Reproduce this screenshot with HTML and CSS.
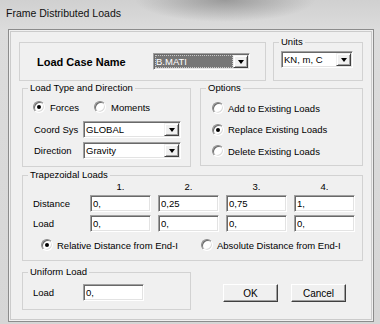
FILE: index.html
```html
<!DOCTYPE html>
<html lang="en">
<head>
  <meta charset="UTF-8">
  <title>Frame Distributed Loads</title>
  <link rel="stylesheet" href="styles.css">
</head>
<body>
  <div class="window">
    <div class="titlebar">Frame Distributed Loads</div>
    <div class="client">
      <div class="dialog">

        <div class="row row-top">
          <div class="group group-case">
            <span class="case-label">Load Case Name</span>
            <div class="combo combo-case">
              <span class="combo-text selected">B.MATI</span>
              <span class="combo-btn"><i class="arrow"></i></span>
            </div>
          </div>
          <div class="group group-units">
            <span class="group-title">Units</span>
            <div class="combo combo-units">
              <span class="combo-text">KN, m, C</span>
              <span class="combo-btn"><i class="arrow"></i></span>
            </div>
          </div>
        </div>

        <div class="row row-mid">
          <div class="group group-type">
            <span class="group-title">Load Type and Direction</span>
            <div class="radio-row">
              <label class="opt opt-forces"><span class="radio on"></span>Forces</label>
              <label class="opt"><span class="radio"></span>Moments</label>
            </div>
            <div class="field-grid">
              <span>Coord Sys</span>
              <div class="combo">
                <span class="combo-text">GLOBAL</span>
                <span class="combo-btn"><i class="arrow"></i></span>
              </div>
              <span>Direction</span>
              <div class="combo">
                <span class="combo-text">Gravity</span>
                <span class="combo-btn"><i class="arrow"></i></span>
              </div>
            </div>
          </div>
          <div class="group group-options">
            <span class="group-title">Options</span>
            <label class="opt"><span class="radio"></span>Add to Existing Loads</label>
            <label class="opt"><span class="radio on"></span>Replace Existing Loads</label>
            <label class="opt"><span class="radio"></span>Delete Existing Loads</label>
          </div>
        </div>

        <div class="group group-trap">
          <span class="group-title">Trapezoidal Loads</span>
          <div class="trap-grid">
            <span></span>
            <span class="col-head">1.</span>
            <span class="col-head">2.</span>
            <span class="col-head">3.</span>
            <span class="col-head">4.</span>

            <span>Distance</span>
            <input class="field" type="text" value="0,">
            <input class="field" type="text" value="0,25">
            <input class="field" type="text" value="0,75">
            <input class="field" type="text" value="1,">

            <span>Load</span>
            <input class="field" type="text" value="0,">
            <input class="field" type="text" value="0,">
            <input class="field" type="text" value="0,">
            <input class="field" type="text" value="0,">
          </div>
          <div class="trap-radios">
            <label class="opt opt-relative"><span class="radio on"></span>Relative Distance from End-I</label>
            <label class="opt"><span class="radio"></span>Absolute Distance from End-I</label>
          </div>
        </div>

        <div class="row row-bottom">
          <div class="group group-uniform">
            <span class="group-title">Uniform Load</span>
            <span class="uniform-label">Load</span>
            <input class="field" type="text" value="0,">
          </div>
          <button class="btn btn-ok">OK</button>
          <button class="btn btn-cancel">Cancel</button>
        </div>

      </div>
    </div>
  </div>
</body>
</html>
```

FILE: styles.css
```css
* { box-sizing: border-box; }
body {
  margin: 0;
  font-family: "Liberation Sans", Arial, sans-serif;
  font-size: 9.5px;
  color: #000;
}

.window {
  width: 380px;
  height: 324px;
  overflow: hidden;
  background:
    radial-gradient(ellipse 90px 22px at 225px 0, rgba(100,100,100,.5), rgba(100,100,100,0)),
    linear-gradient(#d0d0d0, #dcdcdc 30px, #d6d6d6);
}
.titlebar {
  height: 29px;
  padding-left: 6px;
  line-height: 26px;
  font-size: 10.5px;
  color: #111;
}

.client {
  margin-left: 8px;
  width: 366px;
  height: 293px;
  padding: 1px;
  border: 1px solid #8c8c8c;
  background: #f0f0f0;
}
.dialog {
  height: 100%;
  border: 1px solid #cbcbcb;
}

.row { display: flex; align-items: flex-start; }
.row-top { margin-top: 10px; }
.row-mid { margin-top: 7px; }
.row-bottom { margin-top: 11px; }

.group {
  position: relative;
  border: 1px solid #d2d2d2;
}
.group-title {
  position: absolute;
  top: -7px;
  left: 5px;
  padding: 0 2px;
  line-height: 12px;
  background: #f0f0f0;
}

/* load case */
.group-case {
  margin-left: 8px;
  width: 247px;
  height: 39px;
  display: flex;
  align-items: center;
  padding-left: 17px;
}
.case-label {
  width: 116px;
  font-size: 11px;
  font-weight: bold;
}
.combo-case { width: 97px; }

.group-units {
  margin-left: 7px;
  width: 90px;
  height: 39px;
  padding: 8px 0 0 7px;
}
.combo-units { width: 72px; }

/* combo boxes */
.combo {
  display: flex;
  height: 17px;
  padding: 1px;
  background: #fff;
  border: 1px solid;
  border-color: #a0a0a0 #fff #fff #a0a0a0;
  box-shadow: inset 1px 1px #696969, inset -1px -1px #e3e3e3;
}
.combo-text {
  flex: 1;
  padding-left: 1px;
  line-height: 13px;
  white-space: nowrap;
  overflow: hidden;
}
.combo-text.selected {
  background: #767676;
  color: #fff;
  border: 1px dotted #c8c8c8;
  line-height: 11px;
  padding-left: 0;
}
.combo-btn {
  width: 15px;
  display: flex;
  align-items: center;
  justify-content: center;
  background: #f0f0f0;
  border: 1px solid;
  border-color: #f0f0f0 #404040 #404040 #f0f0f0;
  box-shadow: inset 1px 1px #fff, inset -1px -1px #a0a0a0;
}
.arrow {
  width: 1px;
  height: 0;
  border-left: 3px solid transparent;
  border-right: 3px solid transparent;
  border-top: 4px solid #000;
}

/* radios */
.opt {
  display: flex;
  align-items: center;
  gap: 5px;
  height: 14px;
  white-space: nowrap;
}
.radio {
  width: 12px;
  height: 12px;
  flex: none;
  display: flex;
  align-items: center;
  justify-content: center;
  border-radius: 50%;
  background: #fff;
  border: 1px solid;
  border-color: #8a8a8a #fff #fff #8a8a8a;
  box-shadow: inset 1px 1px #6a6a6a, inset -1px -1px #dcdcdc;
}
.radio.on::after {
  content: "";
  width: 4px;
  height: 4px;
  border-radius: 50%;
  background: #000;
}

/* load type */
.group-type {
  margin-left: 11px;
  width: 169px;
  height: 79px;
  padding: 11px 0 0 10px;
}
.radio-row { display: flex; }
.opt-forces { width: 61px; }
.field-grid {
  display: grid;
  grid-template-columns: 49px 98px;
  row-gap: 4px;
  align-items: center;
  margin: 7px 0 0 1px;
}

/* options */
.group-options {
  margin-left: 9px;
  width: 163px;
  height: 78px;
  padding: 12px 0 0 11px;
  display: flex;
  flex-direction: column;
  gap: 7.5px;
}
.group-options .opt { gap: 4px; }

/* trapezoidal */
.group-trap {
  margin: 8px 0 0 11px;
  width: 341px;
  height: 86px;
  padding: 6px 0 0 10px;
}
.trap-grid {
  display: grid;
  grid-template-columns: 50px repeat(4, 61px);
  grid-template-rows: 10px 17px 17px;
  column-gap: 7px;
  row-gap: 3px;
  align-items: center;
}
.col-head {
  text-align: center;
  line-height: 10px;
}
.field {
  width: 61px;
  height: 17px;
  margin: 0;
  padding: 0 2px;
  font: inherit;
  color: #000;
  background: #fff;
  border: 1px solid;
  border-color: #a0a0a0 #fff #fff #a0a0a0;
  box-shadow: inset 1px 1px #696969, inset -1px -1px #e3e3e3;
  outline: none;
}
.trap-radios {
  display: flex;
  margin: 6px 0 0 8px;
}
.trap-radios .opt { gap: 4px; }
.opt-relative { width: 160px; }

/* uniform + buttons */
.group-uniform {
  margin-left: 11px;
  width: 169px;
  height: 38px;
  display: flex;
  align-items: flex-start;
  padding: 11px 0 0 10px;
}
.uniform-label {
  width: 50px;
  line-height: 17px;
}
.btn {
  width: 55px;
  height: 18px;
  margin-top: 12px;
  padding: 0;
  font: inherit;
  font-size: 10px;
  color: #000;
  background: #f0f0f0;
  border: 1px solid;
  border-color: #fff #404040 #404040 #fff;
  box-shadow: inset -1px -1px #a0a0a0;
}
.btn-ok { margin-left: 32px; }
.btn-cancel { margin-left: 13px; }
```
